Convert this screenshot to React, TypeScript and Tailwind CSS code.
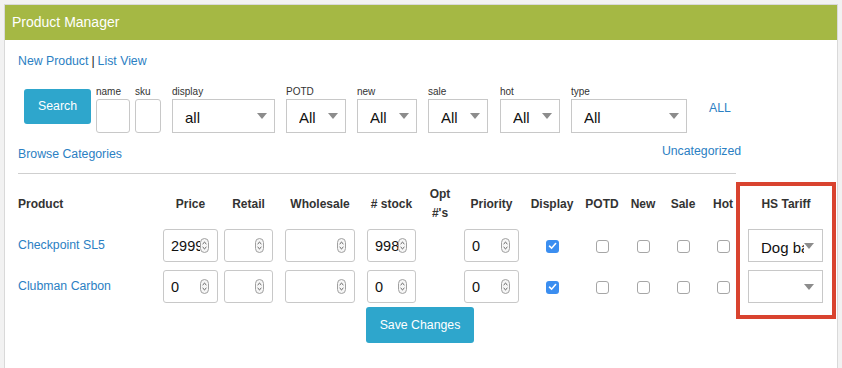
import React from "react"

const font = { fontFamily: '"Liberation Sans", Arial, sans-serif' }

function Caret() {
  return (
    <svg width="10" height="6" viewBox="0 0 10 6" className="shrink-0">
      <path d="M0 0 L10 0 L5 6 Z" fill="#8c8c8c" />
    </svg>
  )
}

function Spinner() {
  return (
    <svg width="9" height="15" viewBox="0 0 9 15" className="shrink-0">
      <rect x="0.5" y="0.5" width="8" height="14" rx="4" fill="#f6f6f6" stroke="#a0a0a0" />
      <path d="M2.6 6 L4.5 4.2 L6.4 6" fill="none" stroke="#444" strokeWidth="0.9" />
      <path d="M2.6 9 L4.5 10.8 L6.4 9" fill="none" stroke="#444" strokeWidth="0.9" />
    </svg>
  )
}

function Select({ value, className }: { value: string; className: string }) {
  return (
    <div className={`flex items-center border border-[#c8c8c8] bg-white pl-[12px] pr-[7px] ${className}`}>
      <span className="flex-1 overflow-hidden whitespace-nowrap pt-[5px] text-[15px] text-[#111]">{value}</span>
      <Caret />
    </div>
  )
}

function NumberBox({ value, className }: { value?: string; className: string }) {
  return (
    <div className={`flex h-[33px] items-center rounded-[3px] border border-[#c8c8c8] bg-white pl-[7px] pr-[8px] ${className}`}>
      <span className="flex-1 overflow-hidden whitespace-nowrap pt-[2px] text-[14.5px] text-[#111]">{value}</span>
      <Spinner />
    </div>
  )
}

function Check({ on }: { on?: boolean }) {
  if (on)
    return (
      <div className="mt-[1px] flex h-[13px] w-[13px] items-center justify-center rounded-[3px] bg-[#3b8ef0]">
        <svg width="9" height="8" viewBox="0 0 9 8">
          <path d="M1.5 4.2 L3.6 6.2 L7.6 1.6" fill="none" stroke="#fff" strokeWidth="1.6" strokeLinecap="round" />
        </svg>
      </div>
    )
  return <div className="mt-[1px] h-[13px] w-[13px] rounded-[3px] border border-[#a6a6a6] bg-white" />
}

function Filter({ label, children, className = "" }: { label: string; children: React.ReactNode; className?: string }) {
  return (
    <div className={`flex flex-col ${className}`}>
      <span className="h-[13px] text-[10px] leading-[12px] text-[#333]">{label}</span>
      {children}
    </div>
  )
}

const cols = [
  "w-[142px] justify-start",
  "w-[61px] justify-center",
  "w-[55px] justify-center",
  "w-[88px] justify-center",
  "w-[55px] justify-center",
  "w-[42px] justify-center",
  "w-[61px] justify-center",
  "w-[60px] justify-center",
  "w-[40px] justify-center",
  "w-[42px] justify-center",
  "w-[38px] justify-center",
  "w-[34px] pl-[8px] justify-center",
]

const rows = [
  { name: "Checkpoint SL5", price: "2999", stock: "998", priority: "0" },
  { name: "Clubman Carbon", price: "0", stock: "0", priority: "0" },
]

export default function App() {
  const heads = ["Product", "Price", "Retail", "Wholesale", "# stock", "", "Priority", "Display", "POTD", "New", "Sale", "Hot"]
  return (
    <div className="h-[368px] w-[842px] overflow-hidden bg-[#f2f2f2] pl-[4px] pt-[4px]" style={font}>
      <div className="h-[400px] w-[834px] border border-[#d9d9d9] bg-white">
        <div className="flex h-[35px] items-center bg-[#a5b844] pl-[7px] pr-[2px] text-[14px] text-white">
          Product Manager
        </div>

        <div className="pl-[13px]">
          <div className="mt-[13px] flex h-[16px] items-center text-[12.3px]">
            <span className="text-[#2b80c3]">New Product</span>
            <span className="mx-[3px] text-[#222]">|</span>
            <span className="text-[#2b80c3]">List View</span>
          </div>

          <div className="mt-[17px] flex items-start">
            <button className="ml-[6px] mt-[3px] flex h-[35px] w-[67px] items-center justify-center rounded-[3px] bg-[#2ea6cc] text-[12.3px] text-white">
              Search
            </button>
            <Filter label="name" className="ml-[5px]">
              <div className="h-[34px] w-[34px] rounded-[3px] border border-[#c8c8c8] bg-white" />
            </Filter>
            <Filter label="sku" className="ml-[5px]">
              <div className="h-[34px] w-[26px] rounded-[3px] border border-[#c8c8c8] bg-white" />
            </Filter>
            <Filter label="display" className="ml-[11px]">
              <Select value="all" className="h-[34px] w-[103px]" />
            </Filter>
            <Filter label="POTD" className="ml-[11px]">
              <Select value="All" className="h-[34px] w-[60px]" />
            </Filter>
            <Filter label="new" className="ml-[11px]">
              <Select value="All" className="h-[34px] w-[60px]" />
            </Filter>
            <Filter label="sale" className="ml-[11px]">
              <Select value="All" className="h-[34px] w-[60px]" />
            </Filter>
            <Filter label="hot" className="ml-[12px]">
              <Select value="All" className="h-[34px] w-[60px]" />
            </Filter>
            <Filter label="type" className="ml-[11px]">
              <Select value="All" className="h-[34px] w-[116px]" />
            </Filter>
            <span className="ml-[22px] mt-[13px] text-[12.3px] text-[#2b80c3]">ALL</span>
          </div>

          <div className="mt-[13px] flex h-[16px] items-center text-[12.3px] text-[#2b80c3]">
            <span>Browse Categories</span>
            <span className="-mt-[6px] ml-[540px]">Uncategorized</span>
          </div>

          <div className="mt-[11px] h-px w-[718px] bg-[#cfcfcf]" />

          <div className="mt-[8px] flex items-start">
            <div className="w-[718px]">
              <div className="flex h-[43px] items-center text-[12px] font-bold text-[#333]">
                {heads.map((h, i) => (
                  <div key={i} className={`flex items-center ${cols[i]}`}>
                    {i === 5 ? (
                      <div className="text-center leading-[19px]">
                        Opt
                        <br />
                        #'s
                      </div>
                    ) : (
                      h
                    )}
                  </div>
                ))}
              </div>
              {rows.map((r) => (
                <div key={r.name} className="flex h-[41px] items-center">
                  <div className={`flex items-center ${cols[0]} text-[12.3px] text-[#2b80c3]`}>{r.name}</div>
                  <div className={`flex ${cols[1]}`}>
                    <NumberBox value={r.price} className="w-[55px]" />
                  </div>
                  <div className={`flex ${cols[2]}`}>
                    <NumberBox className="w-[49px]" />
                  </div>
                  <div className={`flex ${cols[3]}`}>
                    <NumberBox className="w-[70px]" />
                  </div>
                  <div className={`flex ${cols[4]}`}>
                    <NumberBox value={r.stock} className="w-[49px]" />
                  </div>
                  <div className={`flex ${cols[5]}`} />
                  <div className={`flex ${cols[6]}`}>
                    <NumberBox value={r.priority} className="w-[55px]" />
                  </div>
                  <div className={`flex ${cols[7]}`}>
                    <Check on />
                  </div>
                  <div className={`flex ${cols[8]}`}>
                    <Check />
                  </div>
                  <div className={`flex ${cols[9]}`}>
                    <Check />
                  </div>
                  <div className={`flex ${cols[10]}`}>
                    <Check />
                  </div>
                  <div className={`flex ${cols[11]}`}>
                    <Check />
                  </div>
                </div>
              ))}
              <button className="ml-[348px] flex h-[36px] w-[108px] items-center justify-center rounded-[3px] bg-[#2ea6cc] text-[12.3px] text-white">
                Save Changes
              </button>
            </div>

            <div className="w-[100px] border-4 border-[#d9432f] pb-[8px]">
              <div className="flex h-[39px] items-center justify-center pb-[3px] text-[12px] font-bold text-[#333]">HS Tariff</div>
              <div className="flex h-[41px] items-center pl-[8px]">
                <Select value="Dog bag" className="h-[33px] w-[75px] pr-[8px]" />
              </div>
              <div className="flex h-[41px] items-center pl-[8px]">
                <Select value="" className="h-[33px] w-[75px] pr-[8px]" />
              </div>
            </div>
          </div>
        </div>
      </div>
    </div>
  )
}
